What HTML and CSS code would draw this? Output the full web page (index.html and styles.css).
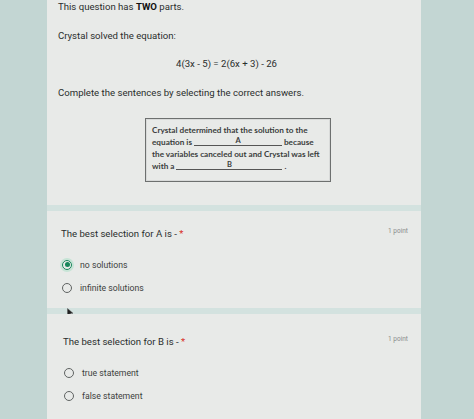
FILE: index.html
```html
<!DOCTYPE html>
<html>
<head>
<meta charset="utf-8">
<link rel="stylesheet" href="styles.css">
</head>
<body>
<div class="page">
  <main class="column">
    <section class="card intro">
      <p class="line first">This question has <b>TWO</b> parts.</p>
      <p class="line">Crystal solved the equation:</p>
      <p class="line eq">4(3x - 5) = 2(6x + 3) - 26</p>
      <p class="line">Complete the sentences by selecting the correct answers.</p>
      <div class="figure">
        <div class="fline">Crystal determined that the solution to the</div>
        <div class="fline">equation is <span class="blank a">A</span> because</div>
        <div class="fline">the variables canceled out and Crystal was left</div>
        <div class="fline">with a <span class="blank b">B</span> .</div>
      </div>
    </section>
    <section class="card q qa">
      <div class="qhead">
        <span class="qtitle">The best selection for A is - <span class="req">*</span></span>
        <span class="pts">1 point</span>
      </div>
      <div class="opts">
        <label class="opt"><span class="radio on"></span><span>no solutions</span></label>
        <label class="opt"><span class="radio"></span><span>infinite solutions</span></label>
      </div>
      <svg class="cursor" width="7" height="9" viewBox="0 0 7 9"><path d="M0.5 0.5 L0.5 7.5 L2.3 5.8 L3.6 8.6 L4.8 8 L3.5 5.3 L6 5.3 Z" fill="#222" stroke="#555" stroke-width="0.5"/></svg>
    </section>
    <section class="card q qb">
      <div class="qhead">
        <span class="qtitle">The best selection for B is - <span class="req">*</span></span>
        <span class="pts">1 point</span>
      </div>
      <div class="opts">
        <label class="opt"><span class="radio"></span><span>true statement</span></label>
        <label class="opt"><span class="radio"></span><span>false statement</span></label>
      </div>
    </section>
  </main>
</div>
</body>
</html>
```
FILE: styles.css
```css
html, body {
  margin: 0;
  padding: 0;
}
body {
  background: #c3d6d3;
  font-family: Roboto, "Liberation Sans", sans-serif;
  color: #2a2e2d;
  width: 474px;
  height: 419px;
  overflow: hidden;
}
.page {
  padding-left: 47px;
}
.column {
  width: 374px;
  display: flex;
  flex-direction: column;
  gap: 6px;
  background: #d3e2df;
}
.card {
  background: #e8eae8;
  position: relative;
}
.intro {
  padding: 0 0 23px 11px;
  height: 182px;
}
.line {
  margin: 15px 0 0;
  font-size: 9.6px;
  line-height: 14px;
  white-space: nowrap;
}
.line.first {
  margin-top: 0;
}
.line b {
  font-weight: 700;
  color: #111;
}
.eq {
  margin-top: 14px;
  padding-left: 118px;
}
.figure {
  margin: 18px 0 0 87px;
  width: 172px;
  height: 50px;
  padding: 5px 6px 7px 6px;
  border: 1px solid #6d706f;
  box-shadow: inset 0 0 0 1px #d8dad9;
  font-family: Lato, "Open Sans", sans-serif;
  font-weight: 700;
  font-size: 8.2px;
  color: #3a3d3c;
}
.fline {
  line-height: 12px;
  white-space: nowrap;
}
.blank {
  display: inline-block;
  border-bottom: 1px solid #555;
  text-align: center;
  line-height: 9px;
  font-size: 7.5px;
  vertical-align: 2px;
}
.blank.a {
  width: 88px;
}
.blank.b {
  width: 106px;
}
.q {
  padding: 16px 13px 9px 14px;
}
.qb {
  padding-top: 21px;
  padding-left: 16px;
  padding-bottom: 12px;
}
.qhead {
  display: flex;
  justify-content: space-between;
  align-items: flex-start;
}
.qtitle {
  font-size: 9.6px;
  line-height: 14px;
  white-space: nowrap;
}
.req {
  color: #d93025;
}
.pts {
  font-size: 6.5px;
  color: #8a8d8c;
  line-height: 8px;
}
.opts {
  margin-top: 12px;
  display: flex;
  flex-direction: column;
}
.opt {
  display: flex;
  align-items: center;
  gap: 8px;
  height: 23px;
  font-size: 8.7px;
  color: #3d4140;
}
.radio {
  margin-left: 1px;
  width: 8px;
  height: 8px;
  border: 1.6px solid #5f6362;
  border-radius: 50%;
  position: relative;
  flex: none;
}
.radio.on {
  border-color: #17865a;
  box-shadow: 0 0 0 2px #c7e4d6;
}
.radio.on::after {
  content: "";
  position: absolute;
  left: 1.5px;
  top: 1.5px;
  width: 5px;
  height: 5px;
  border-radius: 50%;
  background: #17865a;
}
.cursor {
  position: absolute;
  left: 20px;
  top: 97px;
}
```
